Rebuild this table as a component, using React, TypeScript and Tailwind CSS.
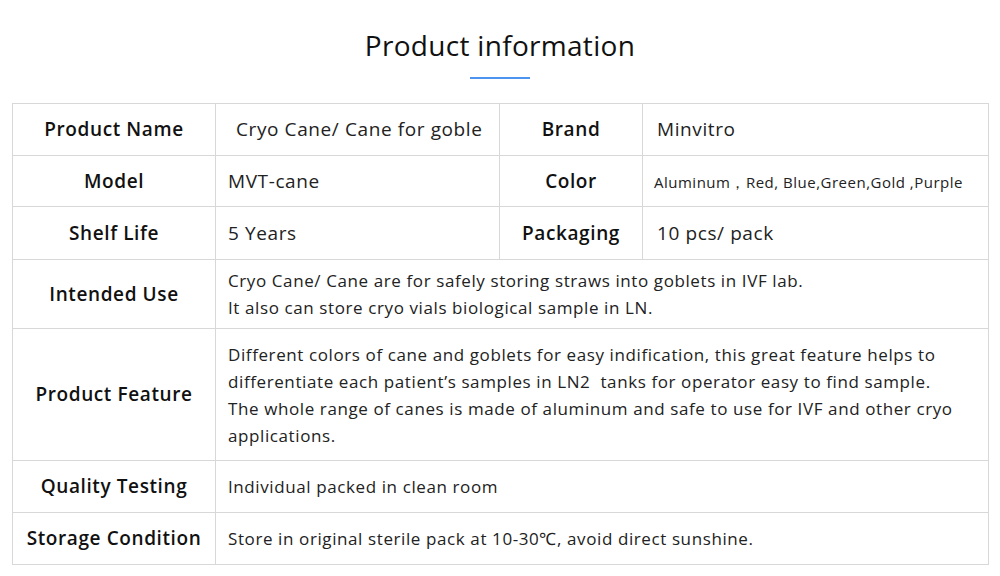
import React from "react";

type Row = {
  label: string;
  value: React.ReactNode;
  label2?: string;
  value2?: React.ReactNode;
  h: string;
};

const rows: Row[] = [
  {
    label: "Product Name",
    value: <span className="pl-2">Cryo Cane/ Cane for goble</span>,
    label2: "Brand",
    value2: "Minvitro",
    h: "h-[52px]",
  },
  {
    label: "Model",
    value: "MVT-cane",
    label2: "Color",
    value2: (
      <span className="-ml-[3px] text-[15px] tracking-[0.5px]">Aluminum，Red, Blue,Green,Gold ,Purple</span>
    ),
    h: "h-[51px]",
  },
  {
    label: "Shelf Life",
    value: "5 Years",
    label2: "Packaging",
    value2: "10 pcs/ pack",
    h: "h-[53px]",
  },
  {
    label: "Intended Use",
    value: (
      <>
        Cryo Cane/ Cane are for safely storing straws into goblets in IVF lab.
        <br />
        It also can store cryo vials biological sample in LN.
      </>
    ),
    h: "h-[69px]",
  },
  {
    label: "Product Feature",
    value: (
      <>
        Different colors of cane and goblets for easy indification, this great feature helps to
        <br />
        differentiate each patient’s samples in LN2&nbsp; tanks for operator easy to find sample.
        <br />
        The whole range of canes is made of aluminum and safe to use for IVF and other cryo
        <br />
        applications.
      </>
    ),
    h: "h-[132px]",
  },
  {
    label: "Quality Testing",
    value: "Individual packed in clean room",
    h: "h-[52px]",
  },
  {
    label: "Storage Condition",
    value: "Store in original sterile pack at 10-30℃, avoid direct sunshine.",
    h: "h-[52px]",
  },
];

const cell = "border border-[#d8d8d8]";
const labelCls = `${cell} px-1 text-center text-[19px] tracking-[0.6px] font-semibold text-[#111]`;

export default function App() {
  return (
    <div className="w-[1000px] h-[576px] bg-white px-3 font-['Open_Sans',sans-serif] text-[#222]">
      <h2 className="pt-[28px] text-center text-[28px] leading-[34px] tracking-[0.3px] font-normal text-[#111]">
        Product information
      </h2>
      <div className="mx-auto mt-[15px] h-[2px] w-[60px] bg-[#4d94f0]" />

      <table className="mt-[24px] w-[976px] table-fixed border-collapse">
        <colgroup>
          <col className="w-[203px]" />
          <col className="w-[284px]" />
          <col className="w-[143px]" />
          <col className="w-[346px]" />
        </colgroup>
        <tbody>
          {rows.map((r) => (
            <tr key={r.label} className={r.h}>
              <td className={labelCls}>{r.label}</td>
              {r.label2 ? (
                <>
                  <td className={`${cell} px-3 text-[19px] tracking-[0.6px] whitespace-nowrap`}>{r.value}</td>
                  <td className={labelCls}>{r.label2}</td>
                  <td className={`${cell} pl-[14px] pr-1 text-[19px] tracking-[0.6px] whitespace-nowrap`}>
                    {r.value2}
                  </td>
                </>
              ) : (
                <td
                  colSpan={3}
                  className={`${cell} px-3 text-[17px] leading-[27px] tracking-[0.6px] whitespace-nowrap`}
                >
                  {r.value}
                </td>
              )}
            </tr>
          ))}
        </tbody>
      </table>
    </div>
  );
}
